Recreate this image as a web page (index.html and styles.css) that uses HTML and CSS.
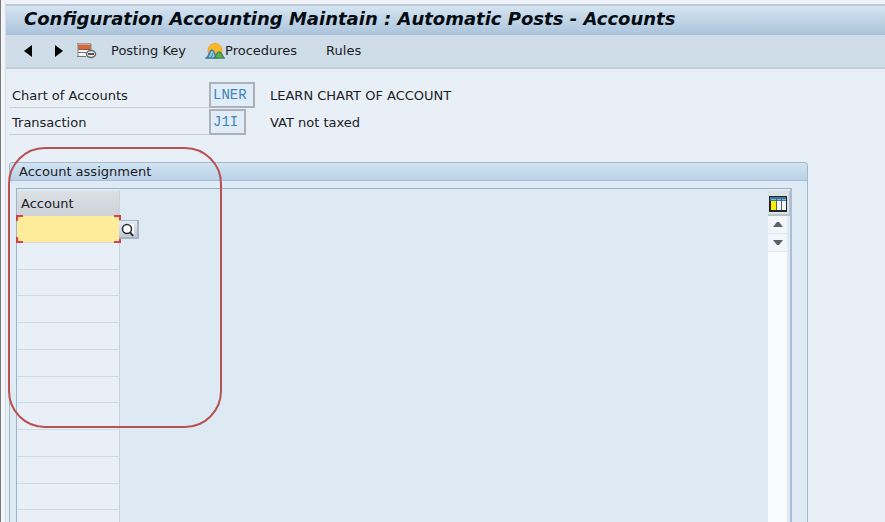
FILE: index.html
```html
<!DOCTYPE html>
<html lang="en">
<head>
<meta charset="utf-8">
<title>Configuration Accounting Maintain</title>
<link rel="stylesheet" href="styles.css">
</head>
<body>
<main class="screen">
  <header class="titlebar"><h1>Configuration Accounting Maintain : Automatic Posts - Accounts</h1></header>
  <nav class="toolbar">
    <button type="button" class="tool prev" aria-label="Previous"><svg width="8" height="12" viewBox="0 0 8 12"><path d="M8 0v12L0 6z" fill="#000"/></svg></button>
    <button type="button" class="tool next" aria-label="Next"><svg width="8" height="12" viewBox="0 0 8 12"><path d="M0 0v12l8-6z" fill="#000"/></svg></button>
    <button type="button" class="tool delete" aria-label="Delete row">
      <svg width="20" height="16" viewBox="0 0 20 16"><path d="M1 1h13v12H1z" fill="#f8f7f5"/><path d="M1 2h13v4H1z" fill="#d9653b"/><path d="M0 1h14M1 6.500h13" stroke="#8c5b4a"/><path d="M1 9.500h9M0 13.500h9" stroke="#777"/><path d="M1 1v13M14 1v6" stroke="#85878a"/><ellipse cx="14" cy="11" rx="4.500" ry="3.500" fill="#eee" stroke="#68696c" stroke-width="1.500"/><path d="M11 11h6" stroke="#555" stroke-width="2"/></svg>
    </button>
    <button type="button" class="tool posting">Posting Key</button>
    <button type="button" class="tool procedures">
      <svg width="20" height="16" viewBox="0 0 20 16"><circle cx="10" cy="7.500" r="7" fill="#fdb926" stroke="#eca02b"/><path d="M1 15c4-1 3-8 6-8 2 0 3 4 4 8z" fill="#90c6df" stroke="#387ea5" stroke-width="1.500"/><path d="M0 15h5c2-1 2-3 3-5" fill="none" stroke="#4785a3"/><path d="M9 15c3-1 2-6 5-6s3 4 5 6z" fill="#6cae54" stroke="#3b8951" stroke-width="1.500"/></svg><span>Procedures</span>
    </button>
    <button type="button" class="tool">Rules</button>
  </nav>
  <form class="fields">
    <div class="field"><label for="chart">Chart of Accounts</label><input id="chart" class="code wide" value="LNER" readonly><output>LEARN CHART OF ACCOUNT</output></div>
    <div class="field"><label for="transaction">Transaction</label><input id="transaction" class="code" value="J1I" readonly><output>VAT not taxed</output></div>
  </form>
  <section class="panel">
    <h2>Account assignment</h2>
    <div class="grid">
      <table>
        <thead><tr><th scope="col">Account</th></tr></thead>
        <tbody>
          <tr><td class="active"><input aria-label="Account"><span class="corners"></span>
            <button type="button" class="lookup" aria-label="Search account"><svg width="16" height="15" viewBox="0 0 16 15"><path d="M4 2h10v10H4z" fill="#fff"/><circle cx="7" cy="7" r="4.500" fill="#fff" stroke="#252a30" stroke-width="1.500"/><path d="M10 10l3 4" stroke="#252a30" stroke-width="2"/></svg></button></td></tr>
          <tr><td></td></tr><tr><td></td></tr><tr><td></td></tr><tr><td></td></tr><tr><td></td></tr>
          <tr><td></td></tr><tr><td></td></tr><tr><td></td></tr><tr><td></td></tr><tr><td></td></tr><tr><td></td></tr>
        </tbody>
      </table>
      <div class="scroller">
        <button type="button" class="config" aria-label="Table settings"><svg width="18" height="16" viewBox="0 0 18 16"><path d="M0 0h18v16H0z" fill="#23282b"/><path d="M1 1h16v4H1z" fill="#3779ad"/><path d="M2 5h5v9H2z" fill="#ffed00"/><path d="M8 5h4v9H8zM13 5h4v9h-4z" fill="#f4f7f8"/><path d="M2 3.500h15" stroke="#86b5d4"/><path d="M7.500 1v13M12.500 1v13" stroke="#52616c"/></svg></button>
        <button type="button" class="arrow" aria-label="Scroll up"><svg width="10" height="5" viewBox="0 0 10 5"><path d="M0 5l4-5h2l4 5z" fill="#59636d"/></svg></button>
        <button type="button" class="arrow" aria-label="Scroll down"><svg width="10" height="5" viewBox="0 0 10 5"><path d="M0 0l4 5h2l4-5z" fill="#59636d"/></svg></button>
        <div class="track"></div>
      </div>
    </div>
    <div class="highlight"></div>
  </section>
</main>
</body>
</html>
```
FILE: styles.css
```css
* { box-sizing: border-box; }

body {
  margin: 0;
  height: 100vh;
  overflow: hidden;
  border-left: 1px solid #777b80;
  background: #f2f4f8;
  color: #1b2025;
  font: 13px/16px "DejaVu Sans", Verdana, sans-serif;
}

button, input { font: inherit; color: inherit; }
button { padding: 0; border: 0; background: none; }
svg { display: block; flex: none; }

.screen {
  display: flex;
  flex-direction: column;
  height: 100vh;
  margin-left: 4px;
  border-top: 4px solid #f0f3fa;
  border-left: 1px solid #d5dbe4;
  background: #e8eff6;
}

.titlebar {
  height: 31px;
  padding-left: 18px;
  border-top: 2px solid #bdc9d7;
  background: linear-gradient(#d5e4f0, #abc4dc);
}

h1 {
  margin: 0;
  color: #050c12;
  font-size: 18px;
  line-height: 25px;
  font-style: italic;
  white-space: nowrap;
}

.toolbar {
  display: flex;
  align-items: center;
  height: 34px;
  padding-left: 18px;
  border-bottom: 2px solid #c3ced9;
  background: #cedde8;
}

.tool { display: flex; align-items: center; white-space: nowrap; }
.prev { margin-right: 23px; }
.next { margin-right: 14px; }
.delete { margin-right: 14px; }
.posting { margin-right: 19px; }
.procedures { margin-right: 29px; }

.fields { padding: 13px 0 0 3px; }
.field { display: flex; height: 27px; }
.field label {
  width: 200px;
  height: 26px;
  padding-left: 3px;
  border-bottom: 1px solid #c8cdd2;
  line-height: 27px;
}
.field output { position: absolute; left: 270px; line-height: 27px; }

.code {
  width: 37px;
  height: 26px;
  padding: 0 0 0 2px;
  border: 2px solid #acb2b9;
  border-radius: 0;
  outline: 0;
  background: #e0edf8;
  color: #3f82b7;
  font: 14px "Liberation Mono", monospace;
}
.wide { width: 46px; }

.panel {
  position: relative;
  display: flex;
  flex: 1;
  flex-direction: column;
  min-height: 0;
  margin: 26px 77px 0 3px;
  padding-right: 15px;
  border: 1px solid #a3b9ce;
  border-bottom: 0;
  border-radius: 4px 4px 0 0;
  background: #deeaf4;
}
h2 {
  margin: 0 -15px 7px 0;
  padding-left: 9px;
  border-bottom: 1px solid #a9bfd5;
  border-radius: 3px 3px 0 0;
  background: linear-gradient(#d2e3f1, #b9d1e8);
  font-size: 13px;
  line-height: 17px;
  font-weight: normal;
}
.grid {
  display: flex;
  flex: 1;
  justify-content: space-between;
  align-items: flex-start;
  min-height: 0;
  margin-left: 6px;
  padding-top: 2px;
  border: 1px solid #9cb5cf;
  border-right: 2px solid #aabfd6;
  border-bottom: 0;
  background: #ddeaf3;
}

table { width: 103px; height: 346px; border-spacing: 0; }
tbody tr { height: 26px; }
th, td { padding: 0; border-right: 1px solid #c7d3de; }
th {
  height: 25px;
  padding-left: 4px;
  background: linear-gradient(#dbe0e4, #ccd3d9);
  font-weight: normal;
  text-align: left;
}
td { border-bottom: 1px solid #d0dae3; background: #e8eff6; }
.active { position: relative; background: #ffec9b; }
.active input {
  display: block;
  width: 100%;
  height: 24px;
  border: 0;
  outline: 0;
  background: transparent;
}
.corners {
  position: absolute;
  inset: -1px -2px -1px -1px;
  pointer-events: none;
  background:
    linear-gradient(#d44248, #d44248) 0 0 / 7px 2px,
    linear-gradient(#d44248, #d44248) 0 0 / 2px 6px,
    linear-gradient(#d44248, #d44248) 100% 0 / 7px 2px,
    linear-gradient(#d44248, #d44248) 100% 0 / 2px 6px,
    linear-gradient(#d44248, #d44248) 0 100% / 7px 2px,
    linear-gradient(#d44248, #d44248) 0 100% / 2px 6px,
    linear-gradient(#d44248, #d44248) 100% 100% / 7px 2px,
    linear-gradient(#d44248, #d44248) 100% 100% / 2px 6px;
  background-repeat: no-repeat;
}
.lookup {
  position: absolute;
  top: 4px;
  left: 102px;
  width: 20px;
  height: 19px;
  padding: 1px;
  border: solid #a6b4c3;
  border-width: 1px 2px 2px 0;
  background: linear-gradient(#e4ebf1, #bccbda);
}

.scroller { display: flex; flex-direction: column; align-self: stretch; width: 22px; }
.config {
  height: 25px;
  padding: 2px 0 0 1px;
  border: solid #b8c2cb;
  border-width: 0 1px 2px 0;
  background: #dce1e4;
}
.arrow {
  display: grid;
  place-items: center;
  width: 19px;
  height: 18px;
  border-bottom: 1px solid #e1e9f1;
  background: #f2f6fa;
}
.track { flex: 1; width: 19px; background: #fafbfd; }

.highlight {
  position: absolute;
  top: -16px;
  left: -2px;
  width: 214px;
  height: 281px;
  border: 2px solid #b95152;
  border-radius: 37px;
  pointer-events: none;
}
```
